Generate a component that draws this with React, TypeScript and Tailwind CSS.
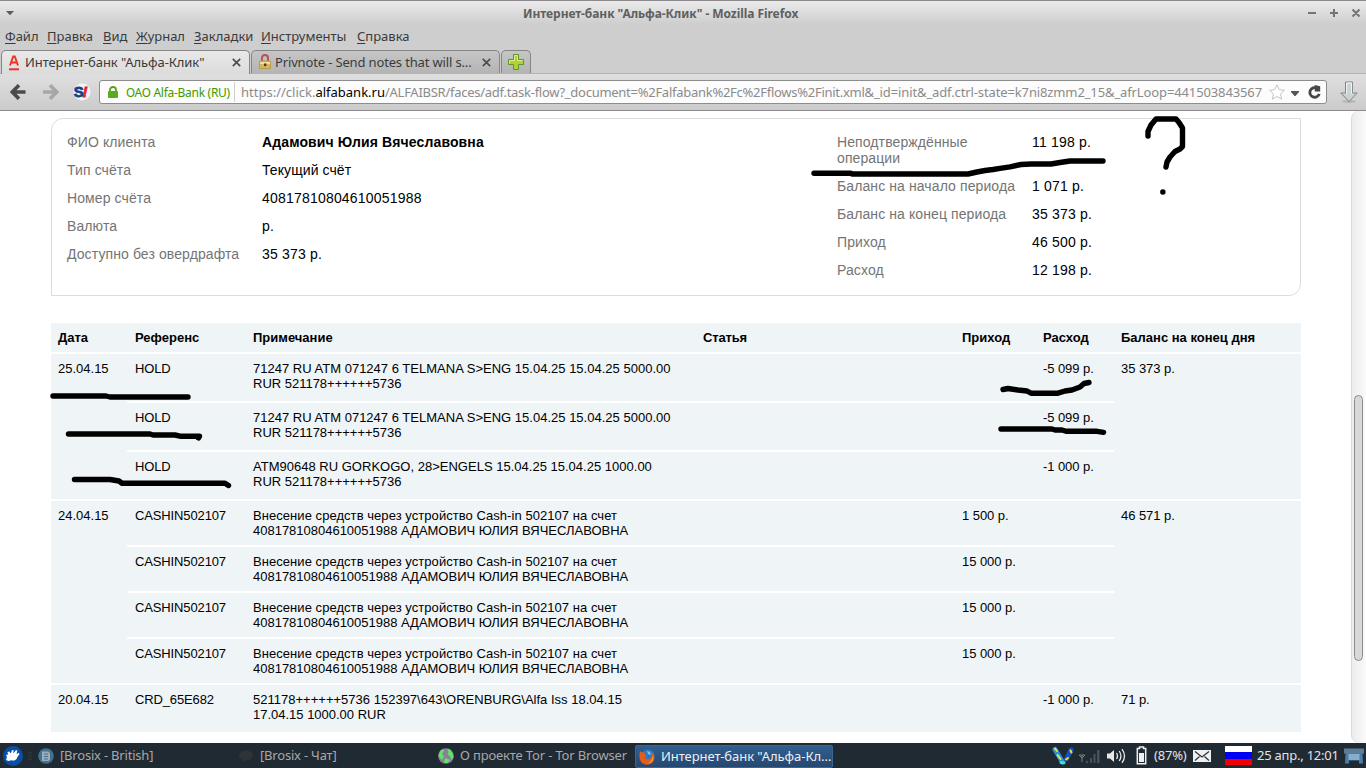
import type { ReactNode } from "react";

const menu = [
  ["Файл", "w-[42px]"],
  ["Правка", "w-[56px]"],
  ["Вид", "w-[33px]"],
  ["Журнал", "w-[58px]"],
  ["Закладки", "w-[67px]"],
  ["Инструменты", "w-[96px]"],
  ["Справка", "w-[60px]"],
];

type Op = { ref: string; note: [string, string]; income?: string; expense?: string };
type Day = { date: string; balance: string; tall: boolean; ops: Op[] };

const cashNote: [string, string] = [
  "Внесение средств через устройство Cash-in 502107 на счет",
  "40817810804610051988 АДАМОВИЧ ЮЛИЯ ВЯЧЕСЛАВОВНА",
];
const atmNote: [string, string] = [
  "71247 RU ATM 071247 6 TELMANA S>ENG 15.04.25 15.04.25 5000.00",
  "RUR 521178++++++5736",
];

const days: Day[] = [
  {
    date: "25.04.15",
    balance: "35 373 р.",
    tall: true,
    ops: [
      { ref: "HOLD", note: atmNote, expense: "-5 099 р." },
      { ref: "HOLD", note: atmNote, expense: "-5 099 р." },
      {
        ref: "HOLD",
        note: ["ATM90648 RU GORKOGO, 28>ENGELS 15.04.25 15.04.25 1000.00", "RUR 521178++++++5736"],
        expense: "-1 000 р.",
      },
    ],
  },
  {
    date: "24.04.15",
    balance: "46 571 р.",
    tall: false,
    ops: [
      { ref: "CASHIN502107", note: cashNote, income: "1 500 р." },
      { ref: "CASHIN502107", note: cashNote, income: "15 000 р." },
      { ref: "CASHIN502107", note: cashNote, income: "15 000 р." },
      { ref: "CASHIN502107", note: cashNote, income: "15 000 р." },
    ],
  },
  {
    date: "20.04.15",
    balance: "71 р.",
    tall: true,
    ops: [
      {
        ref: "CRD_65E682",
        note: ["521178++++++5736 152397\\643\\ORENBURG\\Alfa Iss 18.04.15", "17.04.15 1000.00 RUR"],
        expense: "-1 000 р.",
      },
    ],
  },
];

function Row({ label, children }: { label: ReactNode; children: ReactNode }) {
  return (
    <div className="flex">
      <div className="w-[195px] tracking-[0.1px] text-[#747474]">{label}</div>
      <div className="tracking-[0.2px]">{children}</div>
    </div>
  );
}

function TitleBar() {
  return (
    <div className="flex h-6 shrink-0 items-center border-t border-[#8c8a8c] bg-gradient-to-b from-[#ebebeb] to-[#cecece] pt-px">
      <svg className="ml-[6px] h-2 w-2" viewBox="0 0 8 8">
        <path d="M0 2h8L4 6.3z" fill="#5c5c5c" />
      </svg>
      <div className="mt-[2px] ml-[509px] w-[780px] text-[12px] font-bold tracking-[-0.06px] whitespace-nowrap text-[#606060]">
        Интернет-банк "Альфа-Клик" - Mozilla Firefox
      </div>
      <svg className="h-[10px] w-[60px] shrink-0" viewBox="0 0 60 10" fill="none" stroke="#747474" strokeWidth="2">
        <path d="M5 5h8M27 5h8M31 1v8M49.500 1.500l7 7M56.500 1.500l-7 7" />
      </svg>
    </div>
  );
}

function CloseX() {
  return (
    <svg className="ml-px h-[9px] w-[9px] shrink-0" viewBox="0 0 9 9" stroke="#4d4d4d" strokeWidth="1.700">
      <path d="M.8.8l7.400 7.400M8.200.8L.8 8.200" />
    </svg>
  );
}

function Tabs() {
  return (
    <div className="flex h-6 shrink-0 items-end border-b border-[#b3b3b3] text-[13px] whitespace-nowrap text-[#3a3a3a]">
      <div className="-mb-px ml-px flex h-6 w-[249px] items-center rounded-t-[5px] border border-b-0 border-[#858585] bg-gradient-to-b from-[#e9e9e9] to-[#dcdcdc]">
        <svg className="ml-[7px] h-4 w-[10px]" viewBox="0 0 10 16" fill="none" stroke="#ef3124">
          <path d="M1 10.500L4.200 1.500h1.600L9 10.500M2.300 7.500h5.400" strokeWidth="1.900" />
          <path d="M0 14.300h10" strokeWidth="2" />
        </svg>
        <span className="ml-[6px] w-[206px] tracking-[-0.08px]">Интернет-банк "Альфа-Клик"</span>
        <CloseX />
      </div>
      <div className="ml-px flex h-[23px] w-[249px] items-center rounded-t-[5px] border border-b-0 border-[#858585] bg-gradient-to-b from-[#c6c6c6] to-[#b4b4b4]">
        <svg className="ml-[7px] h-4 w-3" viewBox="0 0 12 16">
          <path d="M3 8V4c0-4 6-4 6 0v4" fill="none" stroke="#b4555a" strokeWidth="2" />
          <path d="M.5 7h11v7.500H.5z" fill="#d5b65e" stroke="#b89c50" />
          <path d="M1 8h10v2H1z" fill="#f0dda0" />
          <path d="M5 9.500h2.400v2.600H5z" fill="#4a3c14" />
        </svg>
        <span className="mt-px ml-[4px] w-[206px] tracking-[-0.15px]">Privnote - Send notes that will s...</span>
        <CloseX />
      </div>
      <div className="ml-px flex h-[23px] w-[30px] items-center justify-center rounded-t-[5px] border border-b-0 border-[#858585] bg-gradient-to-b from-[#c6c6c6] to-[#b4b4b4]">
        <svg className="h-4 w-4" viewBox="0 0 16 16">
          <path d="M5.500.5h5v5h5v5h-5v5h-5v-5h-5v-5h5z" fill="#b2d136" stroke="#62952a" />
          <path d="M6.500 6.500v-5h3v5h5M1.500 9.500v-3h5" fill="none" stroke="#dcec8c" />
        </svg>
      </div>
    </div>
  );
}

function Toolbar() {
  return (
    <div className="flex h-[37px] shrink-0 items-center border-b border-[#8c8a8c] bg-gradient-to-b from-[#dfdfdf] to-[#cbcbcb]">
      <svg className="ml-[10px] h-4 w-4" viewBox="0 0 16 16" fill="none" stroke="#4b4b4b" strokeWidth="3.600">
        <path d="M15.500 8H3M9 1.200L2.200 8 9 14.800" />
      </svg>
      <svg className="ml-[17px] h-4 w-4" viewBox="0 0 16 16" fill="none" stroke="#a7a7a7" strokeWidth="3.600">
        <path d="M0 8h13M7 1.200L13.800 8 7 14.800" />
      </svg>
      <svg className="ml-[13px] h-5 w-[20px]" viewBox="0 0 20 20">
        <circle cx="10" cy="10" r="8.500" fill="#f4f4f4" />
        <text x="1.800" y="15" fontFamily="Liberation Sans" fontWeight="bold" fontSize="15" fill="#12418c" stroke="#12418c" strokeWidth=".8">S</text>
        <text x="10.500" y="15" fontFamily="Liberation Sans" fontWeight="bold" fontStyle="italic" fontSize="15" fill="#e8202a" stroke="#e8202a" strokeWidth=".8">!</text>
      </svg>
      <div className="ml-[7px] flex h-6 w-[1228px] shrink-0 items-center overflow-hidden rounded-[3px] border border-[#8d8d8d] bg-[#fcfcfc] text-[13px] whitespace-nowrap text-[#8b8b8b]">
        <svg className="ml-2 h-3 w-[10px] shrink-0" viewBox="0 0 10 12">
          <path d="M2 6V4c0-4 6-4 6 0v2" fill="none" stroke="#55a51c" strokeWidth="1.800" />
          <rect y="5" width="10" height="7" rx="1" fill="#5aaa20" />
        </svg>
        <span className="mt-px ml-2 w-[104px] shrink-0 text-[12px] tracking-[-0.28px] text-[#429a00]">ОАО Alfa-Bank (RU)</span>
        <span className="mr-[6px] ml-[4px] h-5 w-px shrink-0 bg-[#d0d0d0]" />
        <span className="mt-px w-[1023px] shrink-0">
          https://click.<span className="text-black">alfabank.ru</span>
          <span className="tracking-[-0.27px]">/ALFAIBSR/faces/adf.task-flow?_document=%2Falfabank%2Fc%2Fflows%2Finit.xml</span>
          <span className="tracking-[-0.12px]">&amp;_id=init&amp;_adf.ctrl-state=k7ni8zmm2_15&amp;_afrLoop=441503843567</span>
        </span>
        <svg className="ml-[5px] h-4 w-4 shrink-0" viewBox="0 0 16 16" fill="#fff" stroke="#c4c4c4">
          <path d="M8 .8l2.200 4.900 5.200.6-3.900 3.600 1.100 5.200L8 12.500l-4.600 2.600 1.100-5.200L.6 6.300l5.200-.6z" />
        </svg>
        <svg className="mt-[2px] ml-[6px] h-2 w-2 shrink-0" viewBox="0 0 8 8">
          <path d="M0 2h8v1L4.500 7h-1L0 3z" fill="#555" />
        </svg>
        <svg className="ml-[9px] h-[14px] w-[13px] shrink-0" viewBox="0 0 13 14">
          <path d="M9 3.200A4.800 4.800 0 1 0 11.300 8.800" fill="none" stroke="#474747" strokeWidth="2.800" />
          <path d="M6.600 0l5.600 1.200v5.200H6.800z" fill="#474747" />
        </svg>
      </div>
      <svg className="ml-[12px] h-[23px] w-[20px] shrink-0" viewBox="0 0 20 23">
        <ellipse cx="10" cy="20.500" rx="7" ry="1.500" fill="#b5b5b5" />
        <path d="M6.500 1h7v11h4.700L10 20.500 1.800 12h4.700z" fill="#cbd2d4" stroke="#7d8385" />
        <path d="M7.600 12.500V2h5v10.500" fill="none" stroke="#f3f5f5" />
      </svg>
    </div>
  );
}

function AccountCard() {
  return (
    <div className="ml-[51px] flex h-[178px] w-[1250px] rounded-tl-[12px] rounded-br-[12px] border border-[#dcdcdc] pt-[15px] pl-[15px] text-[14px] leading-4">
      <div className="flex w-[770px] flex-col gap-3">
        <Row label="ФИО клиента"><b className="tracking-[0.12px]">Адамович Юлия Вячеславовна</b></Row>
        <Row label="Тип счёта"><span className="tracking-[0.08px]">Текущий счёт</span></Row>
        <Row label="Номер счёта">40817810804610051988</Row>
        <Row label="Валюта">р.</Row>
        <Row label="Доступно без овердрафта">35 373 р.</Row>
      </div>
      <div className="flex flex-col gap-3">
        <Row label={<>Неподтверждённые<br />операции</>}>11 198 р.</Row>
        <Row label="Баланс на начало периода">1 071 р.</Row>
        <Row label="Баланс на конец периода">35 373 р.</Row>
        <Row label="Приход">46 500 р.</Row>
        <Row label="Расход">12 198 р.</Row>
      </div>
    </div>
  );
}

function Operations() {
  return (
    <div className="mt-[27px] ml-[51px] flex w-[1250px] flex-col gap-[2px] text-[13px] leading-[15px] whitespace-nowrap">
      <div className="flex h-[29px] bg-[#eff4f7] pt-[7px] pl-[7px] font-bold">
        <span className="w-[77px]">Дата</span>
        <span className="w-[118px]">Референс</span>
        <span className="w-[450px]">Примечание</span>
        <span className="w-[259px] tracking-[-0.15px]">Статья</span>
        <span className="w-[81px]">Приход</span>
        <span className="w-[78px]">Расход</span>
        <span>Баланс на конец дня</span>
      </div>
      {days.map((d) => (
        <div key={d.date} className="flex">
          <div className="w-[76px] bg-[#eff4f7] pt-[7px] pl-[7px]">{d.date}</div>
          <div className="flex w-[987px] flex-col gap-[2px]">
            {d.ops.map((o, i) => (
              <div key={i} className={`flex bg-[#eff4f7] pt-[7px] pl-[8px] ${d.tall ? "h-[47px]" : "h-[44px]"}`}>
                <span className="w-[118px] tracking-[-0.13px]">{o.ref}</span>
                <span className="w-[709px]">
                  <span className={d.tall ? "tracking-[0.01px]" : "tracking-[0.055px]"}>{o.note[0]}</span>
                  <br />
                  <span className="tracking-[-0.01px]">{o.note[1]}</span>
                </span>
                <span className="w-[81px] tracking-[-0.05px]">{o.income}</span>
                <span className="tracking-[-0.07px]">{o.expense}</span>
              </div>
            ))}
          </div>
          <div className="w-[187px] bg-[#eff4f7] pt-[7px] pl-[7px] tracking-[-0.05px]">{d.balance}</div>
        </div>
      ))}
    </div>
  );
}

function Marks() {
  return (
    <svg
      className="pointer-events-none absolute top-0 left-0 h-[768px] w-[1366px]"
      viewBox="0 0 1366 768"
      fill="none"
      stroke="#000"
      strokeWidth="5.400"
      strokeLinecap="round"
      strokeLinejoin="round"
    >
      <path d="M814 173.300H851L852 174H968L977 172L985 170.500L993 169.500L1000 168.300L1010 166.800L1021 164.500L1031 164H1051L1060 162.500L1070 161H1103" />
      <path d="M1148 136V131.500L1151 125L1156 119H1176L1179 122.500L1182.500 128V146.500L1180 149L1175 151.500L1170 157L1167 162L1166 167" />
      <path d="M1162.800 192h.1" />
      <path d="M53 396H106L110 397H188" />
      <path d="M68.500 434H150L153 435H175L180 436.200H199.500L198.500 438" />
      <path d="M74.500 479.500H110L119 481L122 483.200H225L228.500 485.500" />
      <path d="M1003 389.500L1008 388.500L1018 390L1027 391L1031 393.200H1058L1065 391L1072 390L1080 387L1084 383.500L1089 382.500" />
      <path d="M1001 429H1052L1055 430H1062L1066 431.300H1097L1103.500 432.300" />
    </svg>
  );
}

function Taskbar() {
  return (
    <div className="flex h-[25px] shrink-0 items-center bg-[#202a33] text-[13px] whitespace-nowrap text-[#a8a8a8]">
      <svg className="ml-[3px] h-5 w-5" viewBox="0 0 20 20">
        <circle cx="10" cy="10" r="10" fill="#0750a8" />
        <path d="M3 14l1-3-1-2 2-.5L4.500 6l1.800-.6 1.500 2.200L9 4l1.600.2-.2 3.400L13 4l1.400.8-1 3.500 2.300-1.500.8 1.200-2.300 3.500c-.8 2.800-3.400 3.600-6 2.800L5.500 15z" fill="#fff" />
      </svg>
      <svg className="ml-[5px] h-2 w-[4px]" viewBox="0 0 4 8" stroke="#343d43"><path d="M0 1h4M0 4h4M0 7h4" /></svg>
      <svg className="ml-[6px] h-4 w-4" viewBox="0 0 16 16">
        <circle cx="8" cy="8" r="7.800" fill="#42718d" />
        <path d="M4 3.500h6.500l1.500 2v6L10.500 13H4z" fill="#9aaeb9" />
        <path d="M6 6h4M6 8.500h4M6 11h4" stroke="#42718d" />
      </svg>
      <span className="ml-[6px] w-[178px] tracking-[-0.2px]">[Brosix - British]</span>
      <svg className="h-3 w-4" viewBox="0 0 16 12"><ellipse cx="8" cy="5.500" rx="7" ry="5" fill="#2e3438" /><path d="M5 9l1 3 4-3z" fill="#2e3438" /></svg>
      <span className="ml-[6px] w-[178px] tracking-[-0.2px]">[Brosix - Чат]</span>
      <svg className="h-4 w-4" viewBox="0 0 16 16">
        <circle cx="8" cy="8" r="7.800" fill="#8b7f97" />
        <path d="M2 3l3-2 1 2-2 3 2 2-2 4-2-2-1.500-2zM9 1.500h3l2.500 3.500 1 4-2 3-1-3-3-3 1-2zM7 10l3 1 2 1-3 3H6z" fill="#5fe56a" />
      </svg>
      <span className="ml-[6px] w-[175px] tracking-[-0.15px]">О проекте Tor - Tor Browser</span>
      <div className="mt-[2px] flex h-[23px] w-[198px] items-center rounded-[2px] border border-[#3a6797] bg-gradient-to-b from-[#2f5f91] to-[#26486f] text-[#f0f0f0]">
        <svg className="ml-[3px] h-4 w-4" viewBox="0 0 16 16">
          <circle cx="9" cy="7" r="6.600" fill="#2d79c2" />
          <path d="M8 2l3 1 1 3-3-1z" fill="#7fc1ea" />
          <path d="M1 2l2 1.500L5.500 3 5 5l2.500 1L6 8c.5 2.800 4 3 6 .8 1.200-1.500.8-4 0-5.800 3.500 2 4.400 6.300 2.500 9.200C11.500 17 4.200 16.800 1.500 12 0 9 .3 5 1 2z" fill="#e65c18" />
          <path d="M14 6c1.200 4.500-1.500 8.500-5.500 8.500 3-.8 4.800-3.500 5.500-8.500z" fill="#f9b42c" />
        </svg>
        <span className="ml-[6px] tracking-[-0.05px]">Интернет-банк "Альфа-Кл...</span>
      </div>
      <svg className="ml-[219px] h-[21px] w-[22px]" viewBox="0 0 22 21" fill="none" strokeLinecap="round">
        <path d="M3 4.500L10.500 17" stroke="#2c8fd8" strokeWidth="5" />
        <path d="M3 3.500L5 6M5.500 10l3 4" stroke="#dcea4a" strokeWidth="2" />
        <path d="M9 17.500l3 .3" stroke="#49dfc0" strokeWidth="3" />
        <path d="M14.500 14l4.500-9" stroke="#1850c0" strokeWidth="5" />
        <path d="M14 14.500l2-1.500M18.500 5.500l1 2" stroke="#e8e13c" strokeWidth="2" />
      </svg>
      <svg className="ml-[4px] h-4 w-[22px]" viewBox="0 0 22 16">
        <path d="M1 7h6L4 10zM4 7v7" fill="none" stroke="#777f84" />
        <path d="M8 13h2v2H8zM12 10h2v5h-2zM15.500 6h2v9h-2zM19 2h2.500v13H19z" fill="#48525a" />
      </svg>
      <svg className="ml-[6px] h-4 w-5" viewBox="0 0 20 16" fill="none" stroke="#e8e8e8" strokeWidth="1.300">
        <path d="M1 5.500h3L8 2v12l-4-3.500H1z" fill="#e8e8e8" stroke="none" />
        <path d="M10.500 5q2 3 0 6M13.200 3q3.500 5 0 10M16 1.200q5 6.800 0 13.600" />
      </svg>
      <svg className="ml-[10px] h-[19px] w-[11px]" viewBox="0 0 11 19">
        <path d="M3.500 2.500V1h4v1.500h2.200v15.200H1.300V2.500z" fill="none" stroke="#eee" strokeWidth="1.500" />
        <path d="M3 7h5v9H3z" fill="#f0f0f0" />
      </svg>
      <span className="ml-[7px] w-[39px] tracking-[-0.2px] text-[#e4e4e4]">(87%)</span>
      <svg className="h-3 w-[18px]" viewBox="0 0 18 12">
        <path d="M0 0h18v12H0z" fill="#f0f0f0" />
        <path d="M2 1.500l7 5.500 7-5.500M2 10.500l4.500-4M16 10.500l-4.500-4" fill="none" stroke="#27313a" strokeWidth="1.200" />
      </svg>
      <div className="ml-[14px] flex h-[19px] w-[27px] flex-col">
        <i className="flex-1 bg-white" />
        <i className="flex-1 bg-[#0000f5]" />
        <i className="flex-1 bg-[#f00000]" />
      </div>
      <span className="ml-[5px] w-[87px] tracking-[-0.22px] text-[#e4e4e4]">25 апр., 12:01</span>
      <svg className="h-4 w-[20px] shrink-0" viewBox="0 0 20 16">
        <path d="M0 .5h20v5H0z" fill="#5d7d96" />
        <path d="M1.500 5h17l.5 10.500H1z" fill="#4b7da8" />
        <path d="M4.500 6h11v6h-11z" fill="#86aecb" />
        <path d="M5 12.500h10v3.500H5z" fill="#202a33" />
      </svg>
    </div>
  );
}

export default function App() {
  return (
    <div className="relative flex h-[768px] w-[1366px] flex-col overflow-hidden bg-[#cecece] font-['Noto_Sans','Open_Sans',sans-serif]">
      <TitleBar />
      <div className="flex h-[26px] shrink-0 items-center pl-[5px] text-[13px] text-[#3a3a3a]">
        {menu.map(([label, width]) => (
          <span key={label} className={`${width} whitespace-nowrap`}>
            <span className="underline underline-offset-2">{label[0]}</span>
            {label.slice(1)}
          </span>
        ))}
      </div>
      <Tabs />
      <Toolbar />
      <div className="flex min-h-0 flex-1 bg-white">
        <div className="w-[1351px] overflow-hidden pt-[7px] font-['Liberation_Sans',sans-serif] text-black">
          <AccountCard />
          <Operations />
        </div>
        <div className="w-[15px] rounded-l-[8px] border-l border-[#dadada] bg-gradient-to-r from-[#ececec] to-[#fbfbfb] pt-[284px] pl-[2px]">
          <div className="h-[266px] w-[9px] rounded-full border border-[#8b8b8b] bg-[#d8d8d8]" />
        </div>
      </div>
      <Taskbar />
      <Marks />
    </div>
  );
}
